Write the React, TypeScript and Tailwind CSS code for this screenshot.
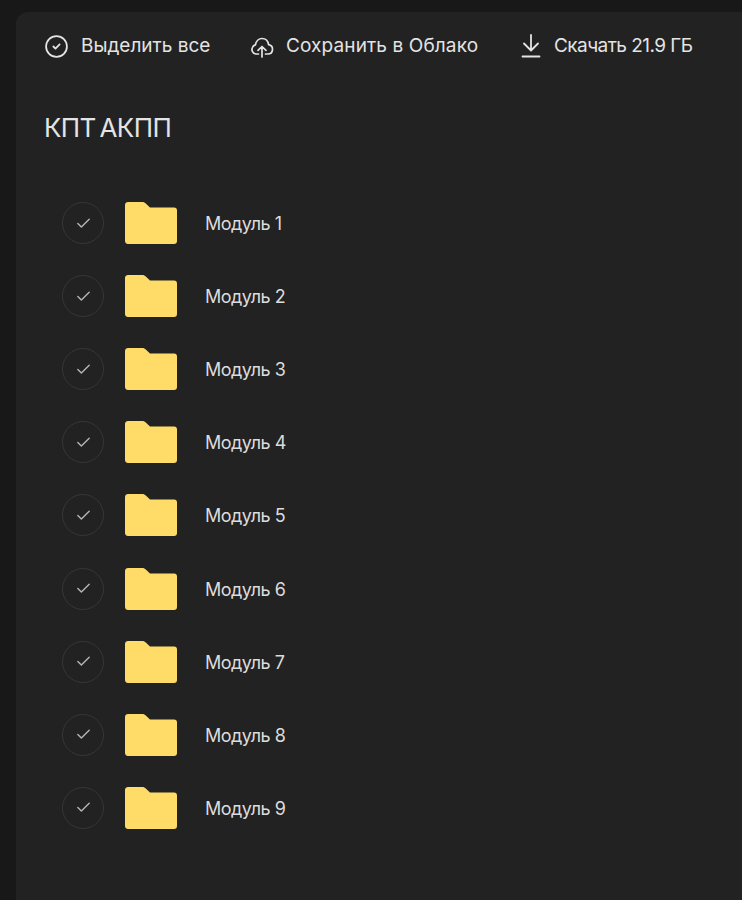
import { Check, CircleCheck } from 'lucide-react';

const modules = ['Модуль 1', 'Модуль 2', 'Модуль 3', 'Модуль 4', 'Модуль 5', 'Модуль 6', 'Модуль 7', 'Модуль 8', 'Модуль 9'];

function FolderIcon() {
  return (
    <svg width="52" height="42" viewBox="0 0 52 42" className="shrink-0">
      <path
        d="M3 0h14c1.500 0 2.500.5 3.500 1.300L25 5.500h24c2 0 3 1 3 3V39c0 2-1 3-3 3H3c-1.500 0-3-1-3-3V3c0-2 1.500-3 3-3z"
        fill="#ffdb67"
      />
    </svg>
  );
}

function CloudIcon() {
  return (
    <svg width="24" height="24" viewBox="0 0 24 24" fill="none" stroke="currentColor" strokeWidth="1.7" strokeLinecap="round" strokeLinejoin="round" className="shrink-0">
      <path d="M8.500 20H5.800a4.600 4.600 0 0 1-3.400-6.500 4.500 4.500 0 0 1 3-2.600C6 7.300 8.800 4.500 12 4.500c3.300 0 6 2.500 6.600 6.200 2.500.5 4 2.700 3.900 4.900-.2 2.500-2 4.400-4.600 4.400h-2.400" />
      <path d="M12 23V12.500M8 16.300l4-3.800 4 3.800" />
    </svg>
  );
}

function DownloadIcon() {
  return (
    <svg width="24" height="26" viewBox="0 0 24 26" fill="none" stroke="currentColor" strokeWidth="1.8" strokeLinecap="round" strokeLinejoin="round" className="shrink-0">
      <path d="M12 2v15M5 10.500l7 7 7-7" />
      <path d="M3.500 23.500h17" />
    </svg>
  );
}

export default function App() {
  return (
    <div className="h-[900px] w-[742px] overflow-hidden bg-[#181818] pl-[16px] pt-[12px] font-['Inter',sans-serif]">
      <div className="h-[888px] rounded-tl-xl bg-[#222222] pl-[28px] text-[#e4e4e4]">
        <div className="flex h-[68px] items-center text-[19px]">
          <div className="flex w-[206px] items-center gap-[12px]">
            <CircleCheck size={25} strokeWidth={1.7} />
            <span className="pt-[1px]">Выделить все</span>
          </div>
          <div className="flex w-[269px] items-center gap-[12px]">
            <CloudIcon />
            <span className="pt-[1px] tracking-[0.12px]">Сохранить в Облако</span>
          </div>
          <div className="flex items-center gap-[11px]">
            <DownloadIcon />
            <span className="pt-[1px] tracking-[-0.55px]">Скачать 21.9 ГБ</span>
          </div>
        </div>
        <h1 className="mt-[32px] text-[26px] leading-[32px] tracking-[-0.6px] [word-spacing:-3px]">КПТ АКПП</h1>
        <ul className="mt-[42.5px] flex flex-col pl-[18px]">
          {modules.map((name) => (
            <li key={name} className="flex h-[73.1px] items-center">
              <span className="flex h-[42px] w-[42px] items-center justify-center rounded-full border border-[#363636]">
                <Check size={17} strokeWidth={2} className="text-[#b5b5b5]" />
              </span>
              <span className="ml-[21px] flex">
                <FolderIcon />
              </span>
              <span className="ml-[28px] pt-[1px] text-[18px] tracking-[-0.5px] text-[#dcdcdc]">{name}</span>
            </li>
          ))}
        </ul>
      </div>
    </div>
  );
}
